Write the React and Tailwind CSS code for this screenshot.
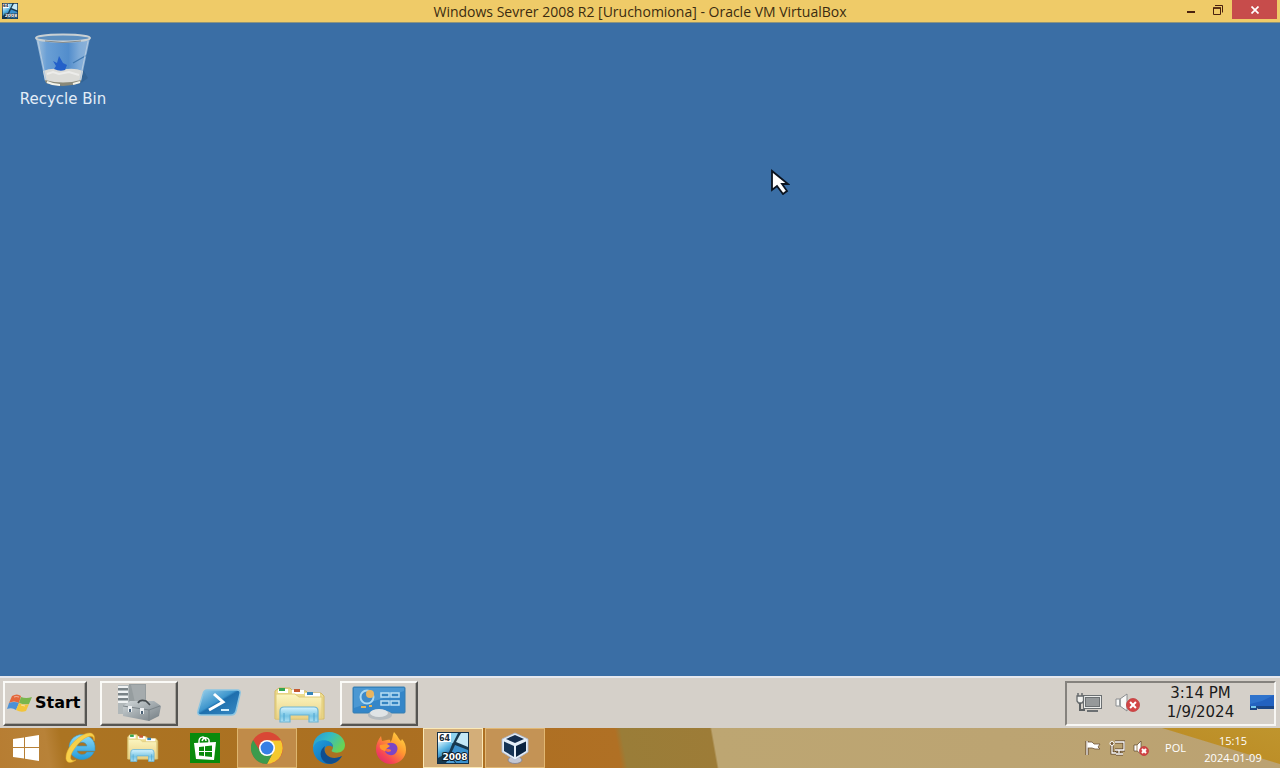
import React from 'react';

const TITLE_FONT = "font-['Open_Sans','Noto_Sans',sans-serif]";
const GUEST_FONT = "font-['DejaVu_Sans',sans-serif]";

function Server2008Icon({ className }) {
  return (
    <svg viewBox="0 0 32 32" className={className} aria-hidden="true">
      <defs>
        <linearGradient id="sky" x1="0" y1="0" x2="0.6" y2="1">
          <stop offset="0" stopColor="#d9f2fc" />
          <stop offset="0.5" stopColor="#58b5e2" />
          <stop offset="1" stopColor="#1c5c9d" />
        </linearGradient>
      </defs>
      <rect width="32" height="32" fill="#17394f" />
      <path d="M1 10 H16 L12 20 L1 26 Z" fill="url(#sky)" />
      <path d="M14 1 H21 L16 11 L14 11 Z" fill="#8ed2ee" />
      <path d="M24 1 H31 V15 L19 10 Z" fill="#c5e9f7" />
      <path d="M18 13 L31 18 V31 H19 L14 22 Z" fill="#3b91cd" />
      <path d="M9 31 L13 24 L18 31 Z" fill="#4f9fd6" />
      <rect x="1" y="1" width="13" height="9" fill="#fff" />
      <text x="7.500" y="8.500" fontSize="8" fontWeight="700" textAnchor="middle" fill="#1c2c38" fontFamily="DejaVu Sans, sans-serif">64</text>
      <text x="18" y="27.500" fontSize="9" fontWeight="700" textAnchor="middle" fill="#fff" stroke="#101d28" strokeWidth="2" paintOrder="stroke" fontFamily="DejaVu Sans, sans-serif">2008</text>
      <rect x="0.500" y="0.500" width="31" height="31" fill="none" stroke="#153047" />
    </svg>
  );
}

function RecycleBinIcon() {
  return (
    <svg viewBox="0 0 60 56" className="h-14 w-15" aria-hidden="true">
      <defs>
        <linearGradient id="glass" x1="0" x2="1">
          <stop offset="0" stopColor="#a4c2dc" />
          <stop offset="0.2" stopColor="#6a9fd5" />
          <stop offset="0.6" stopColor="#528dcc" />
          <stop offset="0.8" stopColor="#7fabd8" />
          <stop offset="1" stopColor="#8fb3d8" />
        </linearGradient>
      </defs>
      <path d="M49 36 L55 46 L45 53 Z" fill="#28557f" opacity="0.4" />
      <path d="M3 6 L12 49 Q30 57 48 49 L57 6 Q30 15 3 6 Z" fill="url(#glass)" />
      <path d="M10 39 Q20 35 29 38 Q40 35 50 39 L48 49 Q30 54 12 49 Z" fill="#dcdcd8" />
      <path d="M14 42 L20 40 L26 42 L36 40 L46 43" stroke="#ececea" strokeWidth="2" fill="none" />
      <path d="M20 29 L24 31 L26 24 L30 31 L34 33 L32 38 Q27 40 21 37 L23 34 Z" fill="#2360c9" />
      <path d="M40 31 L54 23" stroke="#3f78b0" strokeWidth="1.300" />
      <path d="M12 48 Q30 53 48 48 L47 51 Q30 57 13 51 Z" fill="#8a8979" />
      <path d="M14 50 Q20 53 27 53" stroke="#f3f3ea" strokeWidth="2" fill="none" />
      <path d="M40 52 L47 50" stroke="#f3f3ea" strokeWidth="2" />
      <path d="M5 9 L13 48 M55 9 L47 48" stroke="#b5cbe0" strokeWidth="1" />
      <ellipse cx="30" cy="6" rx="27" ry="3.500" fill="#5d8fbf" stroke="#c9d0d3" strokeWidth="2" />
      <path d="M12 9 Q30 12 48 9" fill="none" stroke="#848b8d" strokeWidth="1" />
    </svg>
  );
}

function FlagIcon() {
  return (
    <svg viewBox="0 0 26 20" className="h-5 w-[26px]" aria-hidden="true">
      <path d="M5 3 Q10 0 14 3 L12 10 Q7 7 2 10 Z" fill="#e4683b" />
      <path d="M14 4 Q19 6 25 4 L22 11 Q17 12 12 10 Z" fill="#79b64b" />
      <path d="M2 10 Q7 8 12 10 L9 17 Q5 14 0 16 Z" fill="#4d91d5" />
      <path d="M12 10 Q17 13 22 11 L19 18 Q14 20 9 17 Z" fill="#f2c43a" />
      <path d="M7 4 Q9 3 12 4 M14 12 L18 13" stroke="#fff" strokeWidth="1" opacity="0.5" fill="none" />
    </svg>
  );
}

function ServerManagerIcon() {
  return (
    <svg viewBox="0 0 46 40" className="h-10 w-[46px]" aria-hidden="true">
      <defs>
        <linearGradient id="metal" x1="0" y1="0" x2="1" y2="1">
          <stop offset="0" stopColor="#d2d8da" />
          <stop offset="0.5" stopColor="#a1a9ad" />
          <stop offset="1" stopColor="#737c82" />
        </linearGradient>
      </defs>
      <path d="M2 2 H14 V31 H2 Z" fill="#b1b8ba" />
      <path d="M2 4 H12 M2 9 H12 M2 14 H12 M2 19 H12" stroke="#eff2f3" strokeWidth="2" />
      <path d="M2 6 H12 M2 11 H12 M2 16 H12" stroke="#687277" strokeWidth="1.500" />
      <path d="M13 1 H30 V25 H13 Z" fill="#969d9f" />
      <path d="M15 2 H29 V24 H20 Z" fill="#a5abad" />
      <path d="M7 23 L14 18 H38 L45 23 L43 33 L33 38 L7 33 Z" fill="url(#metal)" />
      <path d="M7 23 L33 27 L44 23 M33 27 V38" stroke="#7a8388" fill="none" />
      <path d="M22 20 Q24 16 30 18 L34 22" stroke="#42484c" strokeWidth="1.700" fill="none" />
      <path d="M14 23 V29 M26 25 V31" stroke="#edf0f2" strokeWidth="4" />
      <path d="M14 26 V29 M26 28 V31" stroke="#496075" strokeWidth="2" />
    </svg>
  );
}

function PowerShellIcon() {
  return (
    <svg viewBox="0 0 50 30" className="h-[30px] w-[50px]" aria-hidden="true">
      <defs>
        <linearGradient id="psblue" x1="0" y1="0" x2="1" y2="1">
          <stop offset="0" stopColor="#9ed2ec" />
          <stop offset="0.45" stopColor="#3e96cd" />
          <stop offset="0.5" stopColor="#1e6fad" />
          <stop offset="1" stopColor="#398bc5" />
        </linearGradient>
      </defs>
      <path d="M13 2 H43 Q47 2 46 6 L42 23 Q41 27 37 27 H7 Q3 27 4 23 L9 6 Q10 2 13 2 Z" fill="url(#psblue)" stroke="#8bc5e2" strokeWidth="1.500" />
      <path d="M20 6 L29 14 L15 22" stroke="#fff" strokeWidth="3" fill="none" />
      <path d="M27 22 H35" stroke="#d5effc" strokeWidth="2" />
    </svg>
  );
}

function ExplorerIcon({ className }) {
  return (
    <svg viewBox="0 0 52 38" preserveAspectRatio="none" className={className} aria-hidden="true">
      <defs>
        <linearGradient id="folder" x1="0" y1="0" x2="0" y2="1">
          <stop offset="0" stopColor="#fbf5bf" />
          <stop offset="1" stopColor="#ead083" />
        </linearGradient>
        <linearGradient id="stand" x1="0" y1="0" x2="0" y2="1">
          <stop offset="0" stopColor="#d6f4ff" />
          <stop offset="0.6" stopColor="#77c5e4" />
          <stop offset="1" stopColor="#b2e2f4" />
        </linearGradient>
      </defs>
      <path d="M1 5 L5 2 H16 L19 5 H32 L34 7 H47 L50 10 V33 H1 Z" fill="#eddc8e" stroke="#d3b966" />
      <path d="M4 3 H14 V7 H4 Z M18 4 H30 V8 H18 Z M31 7 H46 V11 H31 Z" fill="#fff" />
      <path d="M5 2 H11 V5 H5 Z" fill="#35a650" />
      <path d="M20 3 H26 V6 H20 Z" fill="#c45933" />
      <path d="M33 6 H39 V9 H33 Z" fill="#3684ba" />
      <path d="M2 8 H21 L25 11 H48 V33 H2 Z" fill="url(#folder)" stroke="#e0ca78" />
      <path d="M6 36 V25 Q6 21 10 21 H40 Q44 21 44 25 V36 H35 V29 H16 V36 Z" fill="url(#stand)" stroke="#6bb4d4" strokeWidth="1.200" />
      <path d="M10 35 V27 M40 35 V27" stroke="#4ea4d0" />
    </svg>
  );
}

function ControlPanelIcon() {
  return (
    <svg viewBox="0 0 54 34" className="h-[34px] w-[54px]" aria-hidden="true">
      <rect x="1" y="1" width="52" height="26" rx="1" fill="#3486c8" stroke="#367eb1" />
      <path d="M2 2 H52 V5 L2 22 Z" fill="#6db5e4" opacity="0.4" />
      <circle cx="15" cy="11" r="6.500" fill="#3c8aca" stroke="#a8d8f4" strokeWidth="2" />
      <circle cx="18" cy="8" r="4" fill="#e9b55f" />
      <rect x="29" y="7" width="8" height="4" fill="#3484c1" stroke="#b8def4" strokeWidth="1.500" />
      <rect x="39" y="7" width="8" height="4" fill="#3484c1" stroke="#b8def4" strokeWidth="1.500" />
      <rect x="29" y="15" width="8" height="4" fill="#3484c1" stroke="#b8def4" strokeWidth="1.500" />
      <rect x="39" y="15" width="8" height="4" fill="#3484c1" stroke="#b8def4" strokeWidth="1.500" />
      <path d="M9 21 H14 M17 20 H20" stroke="#e8b353" strokeWidth="2" />
      <ellipse cx="28" cy="29" rx="12" ry="5" fill="#b5bbbf" />
      <ellipse cx="27" cy="27" rx="9" ry="4" fill="#dfe3e5" />
    </svg>
  );
}

function RedCross({ x, y, r }) {
  return (
    <g transform={`translate(${x} ${y})`}>
      <circle r={r} fill="#d24545" stroke="#c23e3f" strokeWidth="0.800" />
      <path d={`M${-r * 0.45} ${-r * 0.45} L${r * 0.45} ${r * 0.45} M${r * 0.45} ${-r * 0.45} L${-r * 0.45} ${r * 0.45}`} stroke="#fff" strokeWidth="2" />
    </g>
  );
}

function GuestNetworkIcon() {
  return (
    <svg viewBox="0 0 28 20" className="h-5 w-7" aria-hidden="true">
      <rect x="9.500" y="3.500" width="16" height="11" fill="#96999a" stroke="#6c7072" strokeWidth="3" />
      <rect x="9.500" y="3.500" width="16" height="11" fill="none" stroke="#ecedeb" />
      <path d="M3 0 V4 M7 0 V4" stroke="#666a6c" strokeWidth="1.500" />
      <path d="M2 3 H8.500 V8 L7 10 H3.500 L2 8 Z" fill="#f1f1ee" stroke="#666a6c" strokeWidth="1.300" />
      <path d="M5 10 V17 H10" fill="none" stroke="#5c6062" strokeWidth="2" />
      <path d="M12 18 H23" stroke="#6c7072" strokeWidth="2" />
    </svg>
  );
}

function GuestSoundIcon() {
  return (
    <svg viewBox="0 0 28 20" className="h-5 w-7" aria-hidden="true">
      <path d="M1 6 H5 L12 1 V18 L5 13 H1 Z" fill="#f8f8f7" stroke="#8a8d8f" />
      <path d="M5 6 V13" stroke="#9b9fa1" strokeWidth="2" />
      <path d="M15 6 Q18 8 17 12" fill="none" stroke="#85898b" />
      <RedCross x={18} y={12} r={6.5} />
    </svg>
  );
}

function HostWindowsIcon() {
  return (
    <svg viewBox="0 0 28 26" className="h-[26px] w-7" aria-hidden="true">
      <path d="M1 4 L12 2.500 V12 H1 Z M13 2.300 L27 0 V12 H13 Z M1 13 H12 V23.500 L1 22 Z M13 13 H27 V26 L13 23.700 Z" fill="#fff" />
    </svg>
  );
}

function InternetExplorerIcon() {
  return (
    <svg viewBox="0 0 32 32" className="size-8" aria-hidden="true">
      <defs>
        <linearGradient id="ie" x1="0" y1="0" x2="0" y2="1">
          <stop offset="0" stopColor="#8edaf7" />
          <stop offset="1" stopColor="#229bdc" />
        </linearGradient>
      </defs>
      <path d="M29 20 A13 12.500 0 1 1 30 14 V19 H12 A5.700 5.700 0 0 0 22 20 Z M12 14 H22 A5.200 5.200 0 0 0 12 14 Z" fill="url(#ie)" stroke="#3d93b8" strokeWidth="0.600" fillRule="evenodd" />
      <path d="M29 9 C31 3 27 -1 20 2 C10 6 0 18 1 27 C2 32 7 31 11 28 C4 30 4 24 10 16 C16 7 25 2 28 5 Q29 7 29 9 Z" fill="#f8d04a" stroke="#e3aa28" strokeWidth="0.500" />
    </svg>
  );
}

function StoreIcon() {
  return (
    <svg viewBox="0 0 30 30" className="size-[30px]" aria-hidden="true">
      <rect width="30" height="30" fill="#098a0c" />
      <path d="M9 10 C8 2 16 3 16 8 M12 8 C14 3 20 4 19 10" fill="none" stroke="#fff" strokeWidth="1.500" />
      <path d="M4 10 L26 9 L24 27 L6 26 Z" fill="#fff" />
      <path d="M9 14 L14 13.500 V18 H9 Z M15 13.300 L22 12.500 V18 H15 Z M9 19 H14 V23 L9 22.500 Z M15 19 H22 V24 L15 23.200 Z" fill="#098a0c" />
    </svg>
  );
}

function ChromeIcon() {
  return (
    <svg viewBox="0 0 32 32" className="size-8" aria-hidden="true">
      <circle cx="16" cy="16" r="16" fill="#d94835" />
      <path d="M16 8.500 H29.900 A16 16 0 0 1 16 32 L22.500 19.700 Z" fill="#f5c92e" />
      <path d="M2.100 8 L9.500 19.800 A7.500 7.500 0 0 0 22.500 19.800 L16 32 A16 16 0 0 1 2.100 8 Z" fill="#3b9b4c" />
      <circle cx="16" cy="16" r="8" fill="#fff" />
      <circle cx="16" cy="16" r="6.400" fill="#367fe5" />
    </svg>
  );
}

function EdgeIcon() {
  return (
    <svg viewBox="0 0 32 32" className="size-8" aria-hidden="true">
      <defs>
        <linearGradient id="edgeTop" x1="0" y1="0" x2="1" y2="0.500">
          <stop offset="0" stopColor="#2695d7" />
          <stop offset="0.500" stopColor="#34bbc5" />
          <stop offset="1" stopColor="#69d356" />
        </linearGradient>
        <linearGradient id="edgeSide" x1="0" y1="0" x2="1" y2="1">
          <stop offset="0" stopColor="#229edd" />
          <stop offset="1" stopColor="#0861ac" />
        </linearGradient>
      </defs>
      <path d="M0 16 C0 6 7 0 16 0 C26 0 32 7 32 13 C32 20 25 22 20 20 C17 19 20 18 20 15 C20 8 7 6 0 16 Z" fill="url(#edgeTop)" />
      <path d="M0 16 C3 5 20 7 20 15 C12 10 8 20 15 25 C20 29 26 25 29 24 C26 29 22 32 16 32 C7 32 0 25 0 16 Z" fill="url(#edgeSide)" />
      <path d="M12 14 C9 21 17 30 29 24 C25 31 18 33 13 31 C6 27 6 18 12 14 Z" fill="#104e8d" />
    </svg>
  );
}

function FirefoxIcon() {
  return (
    <svg viewBox="0 0 32 32" className="size-8" aria-hidden="true">
      <defs>
        <linearGradient id="fox" x1="1" y1="0" x2="0.200" y2="1">
          <stop offset="0" stopColor="#ffe747" />
          <stop offset="0.450" stopColor="#ff9830" />
          <stop offset="0.800" stopColor="#f64455" />
          <stop offset="1" stopColor="#dc2c70" />
        </linearGradient>
      </defs>
      <path d="M19 0 C23 4 23 6 26 9 L27 7 C30 10 31 14 31 18 C31 26 24 32 16 32 C7 32 1 25 1 17 C1 12 3 8 6 4 L7 9 L12 8 C14 8 16 7 15 10 C18 8 17 4 19 0 Z" fill="url(#fox)" />
      <path d="M11 13 C15 8 25 12 22 19 C20 25 11 24 10 19 L13 20 C17 20 17 17 13 17 C11 17 9 15 11 13 Z" fill="#7c45c4" />
      <path d="M5 13 L12 12 L15 14 L11 17 L10 19 C6 18 4 16 5 13 Z" fill="#ff982d" />
    </svg>
  );
}

function VirtualBoxIcon() {
  return (
    <svg viewBox="0 0 30 32" className="h-8 w-[30px]" aria-hidden="true">
      <ellipse cx="15" cy="28" rx="7" ry="3.500" fill="#c3c7d4" stroke="#7d7f93" strokeWidth="0.800" />
      <path d="M15 1 L28 7 V20 L15 28 L2 20 V7 Z" fill="#e4eef8" stroke="#a9b8d2" strokeWidth="0.800" />
      <path d="M15 3 L24 7 L15 11 L6 7 Z" fill="#142d4d" />
      <path d="M4 9.500 L14 14 V25 L4 19 Z" fill="#163455" />
      <path d="M26 9.500 L16 14 V25 L26 19 Z" fill="#0a2340" />
    </svg>
  );
}

function HostFlagIcon() {
  return (
    <svg viewBox="0 0 16 16" className="size-4" aria-hidden="true">
      <path d="M2 1 V15" stroke="#573d25" strokeWidth="3" />
      <path d="M2 2 H7 L9 4 H15 L13 7 L15 9 H10 L7 8 H2 Z" fill="#fff" stroke="#6e5437" strokeWidth="0.800" />
      <path d="M2 1 V15" stroke="#fff" strokeWidth="1.300" />
    </svg>
  );
}

function HostNetworkIcon() {
  return (
    <svg viewBox="0 0 16 16" className="size-4" aria-hidden="true">
      <path d="M6 2 H15 V10 H6 M10 10 V13 M7 14 H14 M3 5 V13 H7" stroke="#584128" strokeWidth="3" fill="none" />
      <path d="M6 2 H15 V10 H6 M10 10 V13 M7 14 H14 M3 5 V13 H7" stroke="#fff" strokeWidth="1.300" fill="none" />
      <circle cx="3" cy="3.500" r="2" fill="#735733" stroke="#fff" />
    </svg>
  );
}

function HostSoundIcon() {
  return (
    <svg viewBox="0 0 16 16" className="size-4" aria-hidden="true">
      <path d="M1 5 H4 L8 1 V14 L4 11 H1 Z" fill="#fff" stroke="#59422a" strokeWidth="0.700" />
      <path d="M4 5 V11" stroke="#a68961" />
      <RedCross x={11} y={11} r={4.5} />
    </svg>
  );
}

function TitleBar() {
  return (
    <header className="grid h-[23px] shrink-0 grid-cols-[1fr_auto_1fr] items-start border-b border-[#8c937c] bg-[#efcb68]">
      <Server2008Icon className="mt-[3px] ml-0.5 size-4" />
      <h1 className={`text-sm leading-[23px] text-[#3b2b10] ${TITLE_FONT}`}>
        Windows Sevrer 2008 R2 [Uruchomiona] - Oracle VM VirtualBox
      </h1>
      <div className="flex justify-end pr-[3px]">
        <button type="button" aria-label="Minimize" className="flex h-[19px] w-[26px] items-center justify-center">
          <svg viewBox="0 0 8 8" className="size-2"><path d="M0 6 H8" stroke="#49210e" strokeWidth="2" /></svg>
        </button>
        <button type="button" aria-label="Restore" className="flex h-[19px] w-7 items-center justify-center">
          <svg viewBox="0 0 10 10" className="size-2.5">
            <path d="M0.500 3 H7.500 V9.500 H0.500 Z M2 0.500 H9.500 V7.500" fill="none" stroke="#49210e" />
            <path d="M0 3 H8" stroke="#49210e" strokeWidth="1.500" />
          </svg>
        </button>
        <button type="button" aria-label="Close" className="flex h-[19px] w-[45px] items-center justify-center bg-[#c74c4b]">
          <svg viewBox="0 0 8 8" className="size-2"><path d="M0.500 0.500 L7.500 7.500 M7.500 0.500 L0.500 7.500" stroke="#fff" strokeWidth="1.700" /></svg>
        </button>
      </div>
    </header>
  );
}

function Desktop() {
  return (
    <main className="relative flex-1 bg-[#3a6ea5] pt-[9px] pl-3">
      <button type="button" className={`flex w-[102px] flex-col items-center text-[15px] leading-[22px] text-[#e3edf7] ${GUEST_FONT}`}>
        <RecycleBinIcon />
        <span className="whitespace-nowrap">Recycle Bin</span>
      </button>
      <svg viewBox="0 0 20 26" className="absolute top-[146px] left-[770px] h-[26px] w-5" aria-hidden="true">
        <path d="M2 2 V21 L7 17 L13 25 L17 22 L12 15 H18 Z" fill="#fff" stroke="#0b1420" strokeWidth="1.800" />
      </svg>
    </main>
  );
}

const RAISED = 'border-2 border-t-[#fafaf7] border-l-[#fafaf7] border-r-[#565552] border-b-[#565552] shadow-[inset_-1px_-1px_0_#aaa69f]';

function GuestTaskbar() {
  return (
    <nav aria-label="Server taskbar" className={`flex h-[52px] shrink-0 items-center border-t-2 border-[#e5e8ee] bg-[#d5d0c9] pr-1 pl-[3px] ${GUEST_FONT}`}>
      <button type="button" className={`flex h-[45px] w-[84px] items-center gap-0.5 pl-0.5 text-base font-bold text-black ${RAISED}`}>
        <FlagIcon />
        <span>Start</span>
      </button>
      <div className="ml-[13px] flex items-center">
        <button type="button" aria-label="Server Manager" className={`flex h-[45px] w-[78px] items-center justify-center ${RAISED}`}>
          <ServerManagerIcon />
        </button>
        <button type="button" aria-label="Windows PowerShell" className="flex h-[45px] w-[82px] items-center justify-center">
          <PowerShellIcon />
        </button>
        <button type="button" aria-label="Windows Explorer" className="flex h-[45px] w-20 items-center justify-center pt-1">
          <ExplorerIcon className="h-[38px] w-[52px]" />
        </button>
        <button type="button" aria-label="Control Panel" className={`flex h-[45px] w-[78px] items-center justify-center ${RAISED}`}>
          <ControlPanelIcon />
        </button>
      </div>
      <div className="ml-auto flex h-[45px] w-[211px] items-center border-2 border-t-[#85827d] border-r-[#f7f6f3] border-b-[#f7f6f3] border-l-[#85827d] pl-2">
        <GuestNetworkIcon />
        <span className="ml-3 flex"><GuestSoundIcon /></span>
        <time className="ml-5 flex flex-1 flex-col items-center text-[15px] leading-[19px] text-[#1b1b1b]">
          <span>3:14 PM</span>
          <span>1/9/2024</span>
        </time>
        <button type="button" aria-label="Show desktop" className="ml-3 flex shrink-0">
          <svg viewBox="0 0 24 16" className="h-4 w-6" aria-hidden="true">
            <rect width="24" height="13" fill="#2362c0" />
            <path d="M0 0 H24 L12 6 L0 9 Z" fill="#377ed4" opacity="0.6" />
            <path d="M0 11 H24 V14 H8 L7 13 V15 H0 Z" fill="#1b4685" />
            <path d="M1 12 H6" stroke="#73c8ee" strokeWidth="2" />
          </svg>
        </button>
      </div>
    </nav>
  );
}

const HOST_APPS = [
  { label: 'Internet Explorer', icon: <InternetExplorerIcon />, frame: 'border-transparent' },
  { label: 'File Explorer', icon: <ExplorerIcon className="h-[30px] w-8" />, frame: 'border-transparent' },
  { label: 'Store', icon: <StoreIcon />, frame: 'border-transparent' },
  { label: 'Google Chrome', icon: <ChromeIcon />, frame: 'border-[#deb66f] bg-[#c08b49]' },
  { label: 'Microsoft Edge', icon: <EdgeIcon />, frame: 'border-transparent' },
  { label: 'Firefox', icon: <FirefoxIcon />, frame: 'border-transparent' },
  { label: 'Windows Server 2008 R2', icon: <Server2008Icon className="size-8" />, frame: 'border-[#fae8b6] bg-[#d3ae79]' },
  { label: 'Oracle VM VirtualBox', icon: <VirtualBoxIcon />, frame: 'border-[#e1b773] bg-[#c49355]' },
];

function HostTaskbar() {
  return (
    <nav
      aria-label="Host taskbar"
      className={`flex h-10 shrink-0 items-center bg-[linear-gradient(197deg,#bf952d_0,#bd8f28_34px,transparent_35px),linear-gradient(80deg,#b77d32_0,#b88238_50px,#ab7422_65px,#ab6f21_400px,#b07024_612px,#9a7d38_618px,#9d7c37_706px,#bda672_708px,#bba272_100%)] pr-3.5 text-[11px] text-white ${TITLE_FONT}`}
    >
      <button type="button" aria-label="Start" className="flex h-10 w-[51px] items-center justify-center">
        <HostWindowsIcon />
      </button>
      <ul className="flex gap-0.5">
        {HOST_APPS.map((app) => (
          <li key={app.label}>
            <button type="button" aria-label={app.label} className={`flex h-10 w-[60px] items-center justify-center border ${app.frame}`}>
              {app.icon}
            </button>
          </li>
        ))}
      </ul>
      <div className="ml-auto flex items-center gap-2">
        <HostFlagIcon />
        <HostNetworkIcon />
        <HostSoundIcon />
        <span className="ml-2">POL</span>
        <time className="ml-1.5 flex w-[66px] flex-col items-center pt-0.5 leading-[17px]">
          <span>15:15</span>
          <span>2024-01-09</span>
        </time>
      </div>
    </nav>
  );
}

export default function App() {
  return (
    <div className="flex min-h-screen flex-col overflow-hidden">
      <TitleBar />
      <Desktop />
      <GuestTaskbar />
      <HostTaskbar />
    </div>
  );
}
